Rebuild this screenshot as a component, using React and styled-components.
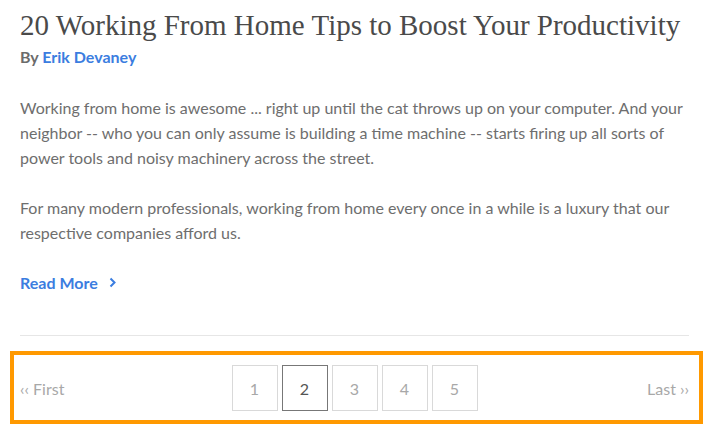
import React from "react";
import styled, { createGlobalStyle } from "styled-components";

const GlobalStyle = createGlobalStyle`
  body {
    margin: 0;
    background: #ffffff;
    font-family: "Lato", "Liberation Sans", sans-serif;
  }
`;

const Page = styled.div`
  width: 722px;
  height: 436px;
  padding-top: 8px;
  box-sizing: border-box;
  overflow: hidden;
`;

const Article = styled.article`
  margin: 0 33px 0 20px;
  border-bottom: 1px solid #e6e6e6;
  padding-bottom: 43px;
`;

const Title = styled.h1`
  margin: 0;
  font-family: "Liberation Serif", serif;
  font-weight: 400;
  font-size: 29px;
  line-height: 34px;
  color: #4a4a4a;
`;

const Byline = styled.div`
  margin-top: 5px;
  font-size: 16px;
  font-weight: 700;
  color: #6b6b6b;
`;

const Author = styled.a`
  color: #3b7de0;
  text-decoration: none;
`;

const Body = styled.div`
  margin-top: 29px;
`;

const Paragraph = styled.p`
  margin: 0 0 25px;
  font-size: 16px;
  line-height: 25px;
  color: #6e6e6e;
`;

const ReadMore = styled.a`
  display: inline-flex;
  align-items: center;
  gap: 11px;
  margin-top: 3px;
  font-size: 16px;
  font-weight: 700;
  color: #3b7de0;
  text-decoration: none;
`;

const Highlight = styled.nav`
  margin: 15px 19px 0 10px;
  border: 4px solid #ff9900;
  padding: 10px 10px 9px 6px;
  display: grid;
  grid-template-columns: 1fr auto 1fr;
  align-items: center;
`;

const EndLink = styled.a`
  font-size: 16px;
  color: #a8a8a8;
  text-decoration: none;
  justify-self: ${(props) => (props.end ? "end" : "start")};
`;

const Pages = styled.div`
  display: flex;
  gap: 4px;
`;

const PageButton = styled.button`
  width: 46px;
  height: 46px;
  box-sizing: border-box;
  background: #ffffff;
  border: 1px solid ${(props) => (props.active ? "#777777" : "#d9d9d9")};
  color: ${(props) => (props.active ? "#555555" : "#a8a8a8")};
  font-family: "Lato", "Liberation Sans", sans-serif;
  font-size: 16px;
  padding: 0;
`;

const Chevron = () => (
  <svg width="7" height="11" viewBox="0 0 7 11">
    <path d="M1.5 1.5 L5.5 5.5 L1.5 9.5" fill="none" stroke="#3b7de0" strokeWidth="2" />
  </svg>
);

export default function App() {
  return (
    <Page>
      <GlobalStyle />
      <Article>
        <Title>20 Working From Home Tips to Boost Your Productivity</Title>
        <Byline>
          By <Author href="#">Erik Devaney</Author>
        </Byline>
        <Body>
          <Paragraph>
            Working from home is awesome ... right up until the cat throws up on your computer. And your
            neighbor -- who you can only assume is building a time machine -- starts firing up all sorts of
            power tools and noisy machinery across the street.
          </Paragraph>
          <Paragraph>
            For many modern professionals, working from home every once in a while is a luxury that our
            respective companies afford us.
          </Paragraph>
        </Body>
        <ReadMore href="#">
          Read More <Chevron />
        </ReadMore>
      </Article>
      <Highlight>
        <EndLink href="#">‹‹ First</EndLink>
        <Pages>
          {[1, 2, 3, 4, 5].map((n) => (
            <PageButton key={n} active={n === 2}>
              {n}
            </PageButton>
          ))}
        </Pages>
        <EndLink href="#" end="true">Last ››</EndLink>
      </Highlight>
    </Page>
  );
}
